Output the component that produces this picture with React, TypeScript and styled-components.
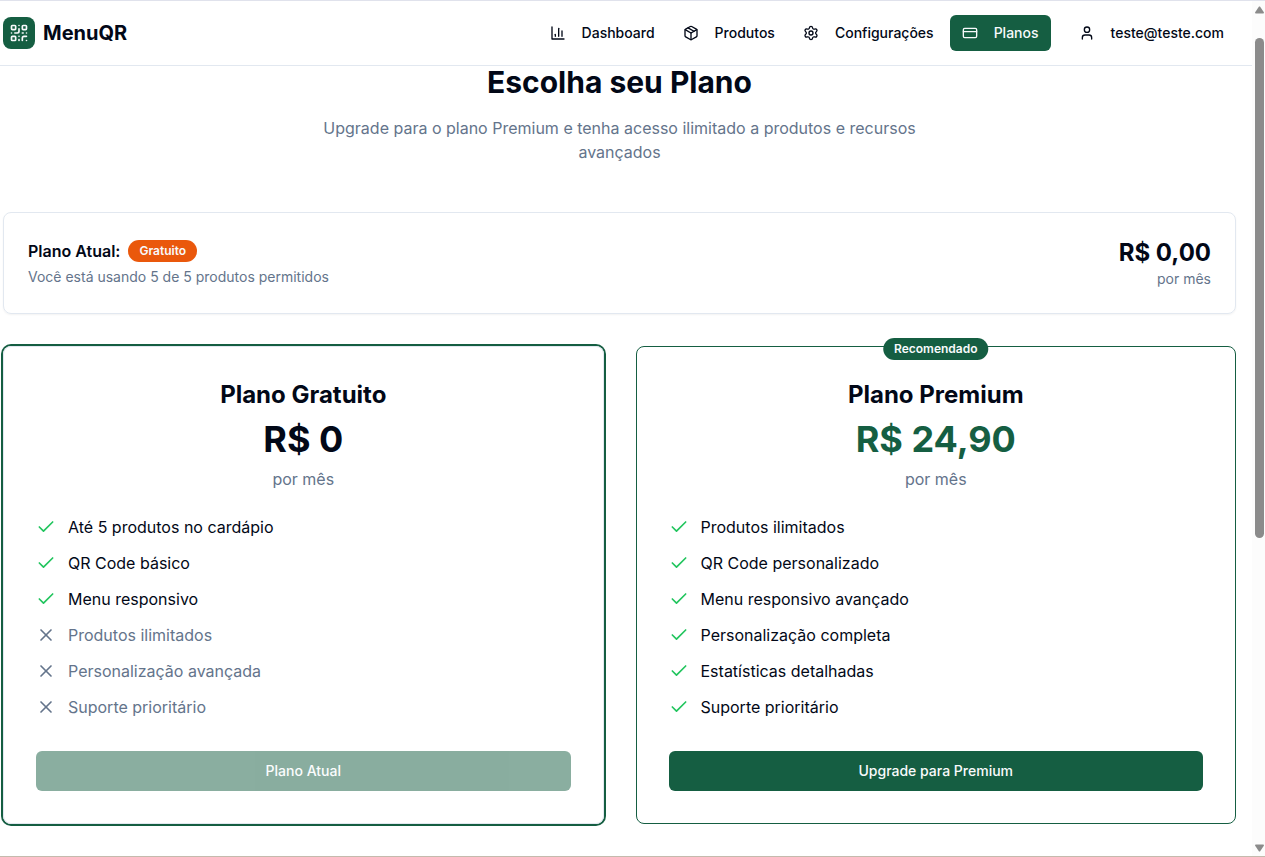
import React from "react";
import styled, { createGlobalStyle, css } from "styled-components";
import {
  Check,
  CreditCard,
  Package,
  QrCode,
  Settings,
  User,
  X,
} from "lucide-react";

const color = {
  ink: "#020817",
  muted: "#64748b",
  line: "#e2e8f0",
  brand: "#155e42",
  onBrand: "#f8fafc",
  orange: "#ea580c",
  success: "#22c55e",
};

const GlobalStyle = createGlobalStyle`
  *, *::before, *::after { box-sizing: border-box; }
  body {
    margin: 0;
    background: #ffffff;
    color: ${color.ink};
    font-family: Inter, "Liberation Sans", sans-serif;
    font-size: 16px;
    line-height: 24px;
  }
  h1, h2, h3, p, ul { margin: 0; padding: 0; }
  ul { list-style: none; }
  a { color: inherit; text-decoration: none; }
  button { font: inherit; color: inherit; border: 0; background: none; cursor: pointer; }
`;

const Window = styled.div`
  display: flex;
  min-height: 100vh;
  border-top: 1px solid #e0e2ec;
  border-bottom: 1px solid #c4baad;
`;

const Page = styled.div`
  flex: 1;
  min-width: 0;
`;

const Header = styled.header`
  display: flex;
  align-items: center;
  justify-content: space-between;
  height: 65px;
  padding: 0 16px 0 3px;
  border-bottom: 1px solid ${color.line};
`;

const Brand = styled.a`
  display: flex;
  align-items: center;
  gap: 8px;
  font-size: 20px;
  font-weight: 700;
  line-height: 28px;
`;

const BrandMark = styled.span`
  display: grid;
  place-items: center;
  width: 32px;
  height: 32px;
  border-radius: 8px;
  background: ${color.brand};
  color: ${color.onBrand};
`;

const HeaderRight = styled.div`
  display: flex;
  align-items: center;
  gap: 16px;
`;

const Nav = styled.nav`
  display: flex;
  align-items: center;
  gap: 4px;
`;

const navItem = css`
  display: inline-flex;
  align-items: center;
  gap: 16px;
  height: 36px;
  padding: 0 12px;
  border-radius: 6px;
  font-size: 14px;
  font-weight: 500;
  line-height: 20px;
  white-space: nowrap;
`;

const NavLink = styled.a<{ $active?: boolean }>`
  ${navItem}
  ${({ $active }) =>
    $active && `background: ${color.brand}; color: ${color.onBrand};`}
`;

const AccountButton = styled.button`
  ${navItem}
`;

const Main = styled.main`
  padding: 0 16px 32px 3px;
`;

const Intro = styled.section`
  display: flex;
  flex-direction: column;
  align-items: center;
  gap: 18px;
  margin-bottom: 48px;
  text-align: center;
`;

const PageTitle = styled.h1`
  font-size: 30px;
  font-weight: 700;
  line-height: 32px;
`;

const Lead = styled.p`
  max-width: 672px;
  color: ${color.muted};
`;

const CurrentPlan = styled.section`
  display: flex;
  align-items: center;
  justify-content: space-between;
  margin-bottom: 32px;
  padding: 24px;
  border: 1px solid ${color.line};
  border-radius: 8px;
  box-shadow: 0 1px 2px rgba(0, 0, 0, 0.05);
`;

const CurrentTitle = styled.div`
  display: flex;
  align-items: center;
  gap: 8px;
  margin-bottom: 4px;
`;

const CurrentLabel = styled.h2`
  font-size: 16px;
  font-weight: 600;
  line-height: 24px;
`;

const Badge = styled.span<{ $tone: string }>`
  padding: 3px 11px;
  border-radius: 11px;
  background: ${({ $tone }) => $tone};
  color: ${color.onBrand};
  font-size: 12px;
  font-weight: 600;
  line-height: 16px;
  white-space: nowrap;
`;

const SmallText = styled.p`
  color: ${color.muted};
  font-size: 14px;
  line-height: 20px;
`;

const CurrentPrice = styled.div`
  text-align: right;
`;

const Amount = styled.p`
  font-size: 24px;
  font-weight: 700;
  line-height: 32px;
`;

const Plans = styled.div`
  display: grid;
  grid-template-columns: repeat(2, minmax(0, 1fr));
  gap: 32px;
`;

const PlanCard = styled.article<{ $current?: boolean }>`
  position: relative;
  display: flex;
  flex-direction: column;
  padding: 32px;
  border: 1px solid ${({ $current }) => ($current ? color.line : color.brand)};
  border-radius: 8px;
  ${({ $current }) => $current && `box-shadow: 0 0 0 2px ${color.brand};`}
`;

const Ribbon = styled.div`
  position: absolute;
  top: -9px;
  left: 50%;
  display: flex;
  transform: translateX(-50%);
`;

const PlanHead = styled.div`
  display: flex;
  flex-direction: column;
  gap: 8px;
  margin-bottom: 24px;
  text-align: center;
`;

const PlanName = styled.h3`
  font-size: 24px;
  font-weight: 700;
  line-height: 32px;
`;

const PlanPrice = styled.p<{ $brand?: boolean }>`
  color: ${({ $brand }) => ($brand ? color.brand : color.ink)};
  font-size: 36px;
  font-weight: 700;
  line-height: 40px;
`;

const Period = styled.p`
  color: ${color.muted};
`;

const Features = styled.ul`
  display: flex;
  flex-direction: column;
  gap: 12px;
  margin-bottom: 32px;
`;

const Feature = styled.li<{ $included: boolean }>`
  display: flex;
  align-items: center;
  gap: 12px;
  color: ${({ $included }) => ($included ? color.ink : color.muted)};

  svg {
    flex: none;
    color: ${({ $included }) => ($included ? color.success : color.muted)};
  }
`;

const PlanButton = styled.button`
  height: 40px;
  border-radius: 6px;
  background: ${color.brand};
  color: ${color.onBrand};
  font-size: 14px;
  font-weight: 500;
  line-height: 20px;

  &:disabled {
    opacity: 0.5;
    cursor: default;
  }
`;

const ScrollTrack = styled.div`
  position: sticky;
  top: 1px;
  display: flex;
  flex: none;
  flex-direction: column;
  align-items: center;
  width: 13px;
  height: calc(100vh - 2px);
  padding: 5px 1px 4px 3px;
  background: #fcfcfc;
`;

const ScrollArrow = styled.svg`
  flex: none;
  width: 9px;
  height: 8px;
  fill: #8b8b8b;
`;

const ScrollLane = styled.div`
  flex: 1;
  width: 100%;
  padding-top: 24px;
`;

const ScrollThumb = styled.div`
  width: 100%;
  height: 62%;
  border-radius: 5px;
  background: #8b8b8b;
`;

type PlanFeature = { text: string; included: boolean };

const freeFeatures: PlanFeature[] = [
  { text: "Até 5 produtos no cardápio", included: true },
  { text: "QR Code básico", included: true },
  { text: "Menu responsivo", included: true },
  { text: "Produtos ilimitados", included: false },
  { text: "Personalização avançada", included: false },
  { text: "Suporte prioritário", included: false },
];

const premiumFeatures: PlanFeature[] = [
  "Produtos ilimitados",
  "QR Code personalizado",
  "Menu responsivo avançado",
  "Personalização completa",
  "Estatísticas detalhadas",
  "Suporte prioritário",
].map((text) => ({ text, included: true }));

function BarsIcon({ size }: { size: number }) {
  return (
    <svg
      width={size}
      height={size}
      viewBox="0 0 24 24"
      fill="none"
      stroke="currentColor"
      strokeWidth="2"
      strokeLinecap="round"
      strokeLinejoin="round"
      aria-hidden="true"
    >
      <path d="M3 3v18h18" />
      <path d="M18 17V9" />
      <path d="M13 17V5" />
      <path d="M8 17v-3" />
    </svg>
  );
}

const navLinks = [
  { label: "Dashboard", Icon: BarsIcon },
  { label: "Produtos", Icon: Package },
  { label: "Configurações", Icon: Settings },
  { label: "Planos", Icon: CreditCard, active: true },
];

function FeatureList({ items }: { items: PlanFeature[] }) {
  return (
    <Features>
      {items.map(({ text, included }) => (
        <Feature key={text} $included={included}>
          {included ? <Check size={20} /> : <X size={20} />}
          <span>{text}</span>
        </Feature>
      ))}
    </Features>
  );
}

export default function App() {
  return (
    <>
      <GlobalStyle />
      <Window>
        <Page>
          <Header>
            <Brand href="#">
              <BrandMark>
                <QrCode size={20} />
              </BrandMark>
              <span>MenuQR</span>
            </Brand>
            <HeaderRight>
              <Nav>
                {navLinks.map(({ label, Icon, active }) => (
                  <NavLink
                    key={label}
                    href="#"
                    $active={active}
                    aria-current={active ? "page" : undefined}
                  >
                    <Icon size={16} />
                    {label}
                  </NavLink>
                ))}
              </Nav>
              <AccountButton type="button">
                <User size={16} />
                teste@teste.com
              </AccountButton>
            </HeaderRight>
          </Header>
          <Main>
            <Intro>
              <PageTitle>Escolha seu Plano</PageTitle>
              <Lead>
                Upgrade para o plano Premium e tenha acesso ilimitado a produtos
                e recursos avançados
              </Lead>
            </Intro>
            <CurrentPlan>
              <div>
                <CurrentTitle>
                  <CurrentLabel>Plano Atual:</CurrentLabel>
                  <Badge $tone={color.orange}>Gratuito</Badge>
                </CurrentTitle>
                <SmallText>Você está usando 5 de 5 produtos permitidos</SmallText>
              </div>
              <CurrentPrice>
                <Amount>R$ 0,00</Amount>
                <SmallText>por mês</SmallText>
              </CurrentPrice>
            </CurrentPlan>
            <Plans>
              <PlanCard $current>
                <PlanHead>
                  <PlanName>Plano Gratuito</PlanName>
                  <PlanPrice>R$ 0</PlanPrice>
                  <Period>por mês</Period>
                </PlanHead>
                <FeatureList items={freeFeatures} />
                <PlanButton type="button" disabled>
                  Plano Atual
                </PlanButton>
              </PlanCard>
              <PlanCard>
                <Ribbon>
                  <Badge $tone={color.brand}>Recomendado</Badge>
                </Ribbon>
                <PlanHead>
                  <PlanName>Plano Premium</PlanName>
                  <PlanPrice $brand>R$ 24,90</PlanPrice>
                  <Period>por mês</Period>
                </PlanHead>
                <FeatureList items={premiumFeatures} />
                <PlanButton type="button">Upgrade para Premium</PlanButton>
              </PlanCard>
            </Plans>
          </Main>
        </Page>
        <ScrollTrack aria-hidden="true">
          <ScrollArrow viewBox="0 0 9 8">
            <path d="M4 0.5h1L9 6.5L8.5 7.5H0.5L0 6.5Z" />
          </ScrollArrow>
          <ScrollLane>
            <ScrollThumb />
          </ScrollLane>
          <ScrollArrow viewBox="0 0 9 8">
            <path d="M4 7.5h1L9 1.5L8.5 0.5H0.5L0 1.5Z" />
          </ScrollArrow>
        </ScrollTrack>
      </Window>
    </>
  );
}
